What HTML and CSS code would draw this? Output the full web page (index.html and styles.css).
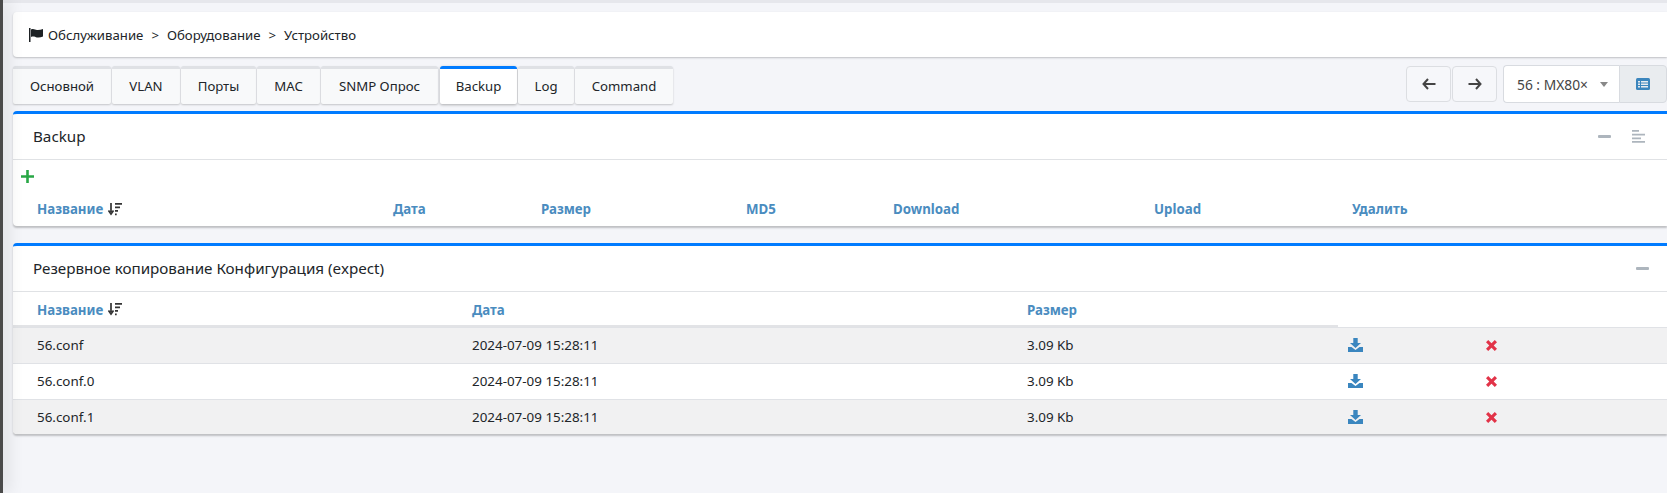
FILE: index.html
```html
<!DOCTYPE html>
<html lang="ru">
<head>
<meta charset="utf-8">
<title>Устройство</title>
<link rel="stylesheet" href="styles.css">
</head>
<body>
<div class="rail"></div>
<main class="content">
  <section class="card crumbs">
    <svg class="flag" viewBox="0 0 14 14"><path d="M0 0h1.500v14H0zM2 1.500c2.500-1.300 4 .2 6 .5 2 .2 4-.3 6-1v7.500c-2 1-4 1.300-6 1-2-.4-3.500-1.600-6-.5z"/></svg>
    <span>Обслуживание</span><span class="sep">&gt;</span><span>Оборудование</span><span class="sep">&gt;</span><span>Устройство</span>
  </section>

  <div class="toolbar">
    <nav class="tabs">
      <a class="tab t1">Основной</a><a class="tab t2">VLAN</a><a class="tab t3">Порты</a><a class="tab t4">MAC</a><a class="tab t5">SNMP Опрос</a><a class="tab t6 active">Backup</a><a class="tab t7">Log</a><a class="tab t8">Command</a>
    </nav>
    <div class="tools">
      <button class="navbtn"><svg viewBox="0 0 14 12"><path d="M6 1 1.500 6 6 11M2 6h11.500" /></svg></button>
      <button class="navbtn"><svg viewBox="0 0 14 12"><path d="M8 1l4.500 5L8 11M12 6H.5" /></svg></button>
      <div class="select"><span>56 : MX80×</span><i class="caret"></i></div>
      <button class="listbtn"><svg viewBox="0 0 14 12"><rect width="14" height="12" rx="1.500" fill="#3c86bd"/><path d="M2 3h2v1.500H2zM5 3h7v1.500H5zM2 5.500h2V7H2zM5 5.500h7V7H5zM2 8h2v1.500H2zM5 8h7v1.500H5z" fill="#e9ecef"/></svg></button>
    </div>
  </div>

  <section class="card panel first">
    <header class="panel-head">
      <h2>Backup</h2>
      <div class="panel-tools">
        <svg class="ptool" viewBox="0 0 13 13"><rect y="5" width="13" height="3" rx="1"/></svg>
        <svg class="ptool" viewBox="0 0 13 13"><path d="M0 0h7v1.800H0zM0 3.700h13v1.800H0zM0 7.400h9v1.800H0zM0 11h13v1.800H0z"/></svg>
      </div>
    </header>
    <div class="add"><svg viewBox="0 0 13 13"><path d="M5.200 0h2.600v5.200H13v2.600H7.800V13H5.200V7.800H0V5.200h5.200z"/></svg></div>
    <div class="grid-a">
      <div class="th"><span>Название</span><svg class="sort" viewBox="0 0 14 13"><path d="M3 0v9M.5 7.500 3 11l2.500-3.500" fill="none" stroke="#333" stroke-width="1.700"/><path d="M7 0h7v1.700H7zM7 3.500h5v1.700H7zM7 7h3v1.700H7zM7 10.500h1.700v1.700H7z" fill="#333"/></svg></div>
      <div class="th">Дата</div><div class="th">Размер</div><div class="th">MD5</div><div class="th">Download</div><div class="th">Upload</div><div class="th">Удалить</div>
    </div>
  </section>

  <section class="card panel second">
    <header class="panel-head">
      <h2>Резервное копирование Конфигурация (expect)</h2>
      <div class="panel-tools"><svg class="ptool" viewBox="0 0 13 13"><rect y="5" width="13" height="3" rx="1"/></svg></div>
    </header>
    <div class="grid-b head-row">
      <div class="th"><span>Название</span><svg class="sort" viewBox="0 0 14 13"><path d="M3 0v9M.5 7.500 3 11l2.500-3.500" fill="none" stroke="#333" stroke-width="1.700"/><path d="M7 0h7v1.700H7zM7 3.500h5v1.700H7zM7 7h3v1.700H7zM7 10.500h1.700v1.700H7z" fill="#333"/></svg></div>
      <div class="th">Дата</div><div class="th">Размер</div><div class="th"></div><div class="th"></div>
    </div>
    <div class="grid-b row odd">
      <div>56.conf</div><div>2024-07-09 15:28:11</div><div>3.09 Kb</div>
      <div><svg class="dl" viewBox="0 0 15 14"><path d="M5.300 0h4.400v5H13L7.500 10 2 5h3.300z"/><path d="M0 9h3.500l4 3 4-3H15v5H0z"/></svg></div>
      <div><svg class="del" viewBox="0 0 11 11"><path d="M2.200 0 5.500 3.300 8.800 0 11 2.200 7.700 5.500 11 8.800 8.800 11 5.500 7.700 2.200 11 0 8.800 3.300 5.500 0 2.200z"/></svg></div>
    </div>
    <div class="grid-b row">
      <div>56.conf.0</div><div>2024-07-09 15:28:11</div><div>3.09 Kb</div>
      <div><svg class="dl" viewBox="0 0 15 14"><path d="M5.300 0h4.400v5H13L7.500 10 2 5h3.300z"/><path d="M0 9h3.500l4 3 4-3H15v5H0z"/></svg></div>
      <div><svg class="del" viewBox="0 0 11 11"><path d="M2.200 0 5.500 3.300 8.800 0 11 2.200 7.700 5.500 11 8.800 8.800 11 5.500 7.700 2.200 11 0 8.800 3.300 5.500 0 2.200z"/></svg></div>
    </div>
    <div class="grid-b row odd">
      <div>56.conf.1</div><div>2024-07-09 15:28:11</div><div>3.09 Kb</div>
      <div><svg class="dl" viewBox="0 0 15 14"><path d="M5.300 0h4.400v5H13L7.500 10 2 5h3.300z"/><path d="M0 9h3.500l4 3 4-3H15v5H0z"/></svg></div>
      <div><svg class="del" viewBox="0 0 11 11"><path d="M2.200 0 5.500 3.300 8.800 0 11 2.200 7.700 5.500 11 8.800 8.800 11 5.500 7.700 2.200 11 0 8.800 3.300 5.500 0 2.200z"/></svg></div>
    </div>
  </section>
</main>
</body>
</html>
```
FILE: styles.css
```css
* { box-sizing: border-box; }
html, body { height: 100%; }
body {
  margin: 0;
  display: flex;
  background: #f4f5f9;
  color: #212529;
  font-family: "Noto Sans", "Open Sans", sans-serif;
  font-size: 13.400px;
  overflow: hidden;
}
.rail {
  flex: 0 0 3px;
  background: #4a4a4a;
  box-shadow: 2px 0 16px rgba(0, 0, 0, .34);
  position: relative;
  z-index: 2;
}
.content {
  flex: 1;
  min-width: 0;
  padding: 12px 0 0 10px;
  border-top: 3px solid #e6e7ec;
}
.card {
  background: #fff;
  border-radius: 4px 0 0 4px;
  box-shadow: 0 1px 2px rgba(0, 0, 0, .22);
}
.crumbs {
  height: 45px;
  margin-top: -3px;
  display: flex;
  align-items: center;
  padding-left: 16px;
  font-size: 13.200px;
}
.flag { width: 14px; height: 14px; fill: #1d2124; margin-right: 5px; }
.sep { margin: 0 8px; }

.toolbar {
  display: flex;
  justify-content: space-between;
  margin-top: 9px;
  height: 38px;
}
.tabs { display: flex; gap: 1px; height: 38px; font-size: 13.200px; }
.tab {
  display: flex;
  align-items: center;
  justify-content: center;
  background: #f8f9fa;
  border-top: 3px solid #dfe1e5;
  border-radius: 3px 3px 2px 2px;
  box-shadow: 0 1px 2px rgba(0, 0, 0, .2);
  padding-bottom: 1px;
}
.t1 { width: 98px; }
.t2 { width: 68px; }
.t3 { width: 75px; }
.t4 { width: 63px; }
.t5 { width: 117px; }
.t6 { width: 77px; margin-left: 1px; }
.t7 { width: 56px; }
.t8 { width: 98px; }
.tab.active { background: #fff; border-top-color: #007bff; box-shadow: 0 1px 3px rgba(0, 0, 0, .3); }

.tools { display: flex; align-items: flex-start; height: 38px; margin-top: -1px; }
.navbtn {
  width: 45px;
  height: 36px;
  margin-top: 1px;
  background: #f6f7fa;
  border: 1px solid #dcdee2;
  border-radius: 4px;
  padding: 0;
  display: flex;
  align-items: center;
  justify-content: center;
}
.navbtn + .navbtn { margin-left: 1px; }
.navbtn svg { width: 14px; height: 12px; fill: none; stroke: #444; stroke-width: 2; }
.select {
  width: 116px;
  margin-left: 6px;
  height: 38px;
  background: #fff;
  border: 1px solid #d8dbe0;
  border-right: 0;
  border-radius: 4px 0 0 4px;
  display: flex;
  align-items: center;
  padding-left: 13px;
  color: #444;
  font-size: 13.800px;
}
.caret {
  margin-left: 12px;
  border: 4px solid transparent;
  border-top: 5px solid #888;
  border-bottom: 0;
  width: 0;
  height: 0;
}
.listbtn {
  width: 48px;
  height: 38px;
  background: #e9ecef;
  border: 1px solid #d8dbe0;
  border-radius: 0 4px 4px 0;
  padding: 0;
  display: flex;
  align-items: center;
  justify-content: center;
}
.listbtn svg { width: 14px; height: 12px; }

.panel { border-top: 3px solid #007bff; box-shadow: 0 2px 2px rgba(0, 0, 0, .22); }
.first { margin-top: 7px; height: 115px; }
.second { margin-top: 17px; height: 191px; }
.panel-head {
  height: 46px;
  border-bottom: 1px solid #e0e2e5;
  display: flex;
  align-items: center;
  justify-content: space-between;
  padding: 0 0 1px 20px;
}
h2 { margin: 0; font-size: 15.200px; font-weight: 400; color: #212529; }
.panel-tools { display: flex; gap: 21px; padding-right: 22px; align-items: center; }
.second .panel-tools { padding-right: 18px; }
.ptool { width: 13px; height: 13px; fill: #adb5bd; display: block; }

.add { height: 33px; padding: 10px 0 0 8px; }
.add svg { width: 13px; height: 13px; fill: #28a745; display: block; }

.grid-a, .grid-b { display: grid; align-items: center; }
.grid-a { grid-template-columns: 356px 148px 205px 147px 261px 198px 1fr; height: 33px; padding: 0 0 1px 24px; }
.grid-b { grid-template-columns: 435px 555px 321px 138px 1fr; padding-left: 24px; }
.th { color: #4a8cbf; font-weight: 700; font-size: 13.300px; display: flex; align-items: center; gap: 5px; }
.sort { width: 14px; height: 13px; }
.head-row {
  height: 35px;
  background: linear-gradient(#e2e3e6, #e2e3e6) no-repeat left bottom / 1325px 2px;
  background-color: #fff;
}
.row { height: 36px; padding-bottom: 1px; border-top: 1px solid #e0e2e6; background: #fff; }
.row:last-child { height: 35px; padding-bottom: 0; border-radius: 0 0 0 4px; }
.row.odd { background: #f1f1f2; }
.dl { width: 15px; height: 14px; fill: #3a86bf; display: block; }
.del { width: 11px; height: 11px; fill: #e23348; display: block; }
```
